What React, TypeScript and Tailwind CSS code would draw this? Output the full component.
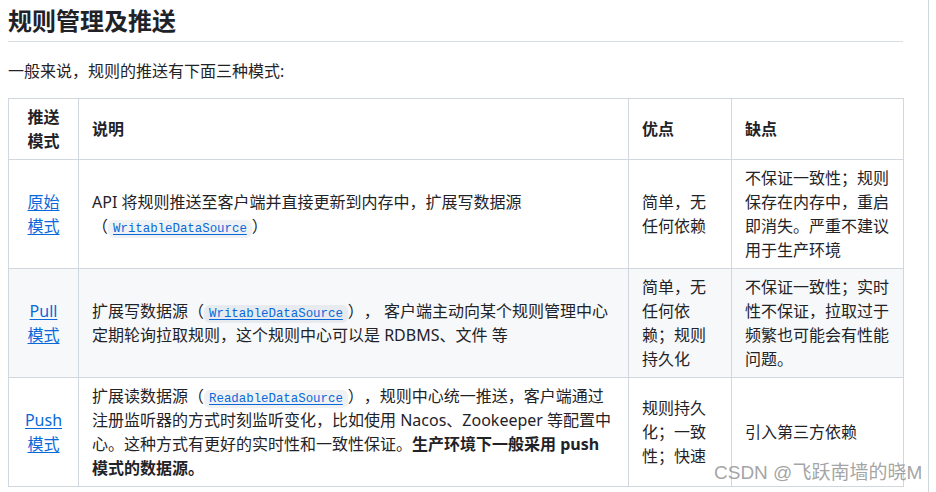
import React from "react";

const font = '"Noto Sans", "Noto Sans CJK SC", sans-serif';
const mono = '"Liberation Mono", "DejaVu Sans Mono", monospace';

function Code({ children }: { children: React.ReactNode }) {
  return (
    <a className="text-[#0969da] underline underline-offset-2">
      <code
        className="rounded-[6px] bg-[#afb8c133] px-[5px] py-[2px] text-[12.4px] leading-none"
        style={{ fontFamily: mono }}
      >
        {children}
      </code>
    </a>
  );
}

function Link({ children }: { children: React.ReactNode }) {
  return <a className="text-[#0969da] underline underline-offset-2">{children}</a>;
}

const cell = "border border-[#d0d7de] px-[13px] py-[6px] align-middle";

export default function App() {
  return (
    <div
      className="flex h-[492px] w-[936px] overflow-hidden bg-white text-[#1f2328] [text-spacing-trim:space-all]"
      style={{ fontFamily: font }}
    >
      <div className="relative w-[929px] shrink-0 border-r border-[#d0d7de] pl-[8px]">
        <div className="w-[895px]">
          <h2 className="mt-[6px] border-b border-[#d8dee4] pb-[5px] text-[24px] font-bold leading-[30px]">
            规则管理及推送
          </h2>
          <p className="mt-[17px] text-[16px] leading-[24px]">一般来说，规则的推送有下面三种模式:</p>
          <table className="mt-[15px] w-[895px] table-fixed border-collapse text-[16px] leading-[24px]">
            <colgroup>
              <col className="w-[70px]" />
              <col className="w-[550px]" />
              <col className="w-[103px]" />
              <col className="w-[172px]" />
            </colgroup>
            <thead>
              <tr className="bg-white">
                <th className={`${cell} text-center font-bold`}>推送模式</th>
                <th className={`${cell} text-left font-bold`}>说明</th>
                <th className={`${cell} text-left font-bold`}>优点</th>
                <th className={`${cell} text-left font-bold`}>缺点</th>
              </tr>
            </thead>
            <tbody>
              <tr className="bg-white">
                <td className={`${cell} text-center`}>
                  <Link>原始模式</Link>
                </td>
                <td className={cell}>
                  API 将规则推送至客户端并直接更新到内存中，扩展写数据源（<Code>WritableDataSource</Code>）
                </td>
                <td className={cell}>简单，无任何依赖</td>
                <td className={cell}>不保证一致性；规则保存在内存中，重启即消失。严重不建议用于生产环境</td>
              </tr>
              <tr className="bg-[#f6f8fa]">
                <td className={`${cell} text-center`}>
                  <Link>Pull 模式</Link>
                </td>
                <td className={cell}>
                  扩展写数据源（<Code>WritableDataSource</Code>）， 客户端主动向某个规则管理中心定期轮询拉取规则，这个规则中心可以是 RDBMS、文件 等
                </td>
                <td className={cell}>简单，无任何依赖；规则持久化</td>
                <td className={cell}>不保证一致性；实时性不保证，拉取过于频繁也可能会有性能问题。</td>
              </tr>
              <tr className="bg-white">
                <td className={`${cell} text-center`}>
                  <Link>Push 模式</Link>
                </td>
                <td className={cell}>
                  扩展读数据源（<Code>ReadableDataSource</Code>），规则中心统一推送，客户端通过注册监听器的方式时刻监听变化，比如使用 Nacos、Zookeeper 等配置中心。这种方式有更好的实时性和一致性保证。
                  <strong className="font-bold">生产环境下一般采用 push 模式的数据源。</strong>
                </td>
                <td className={cell}>规则持久化；一致性；快速</td>
                <td className={cell}>引入第三方依赖</td>
              </tr>
            </tbody>
          </table>
        </div>
        <div
          className="pointer-events-none absolute left-[714px] top-[461px] whitespace-nowrap text-[19px] leading-[24px] text-[#8c8c8c]/80"
          style={{ fontFamily: '"Liberation Sans", "Noto Sans CJK SC", sans-serif' }}
        >
          CSDN @飞跃南墙的晓M
        </div>
      </div>
    </div>
  );
}
